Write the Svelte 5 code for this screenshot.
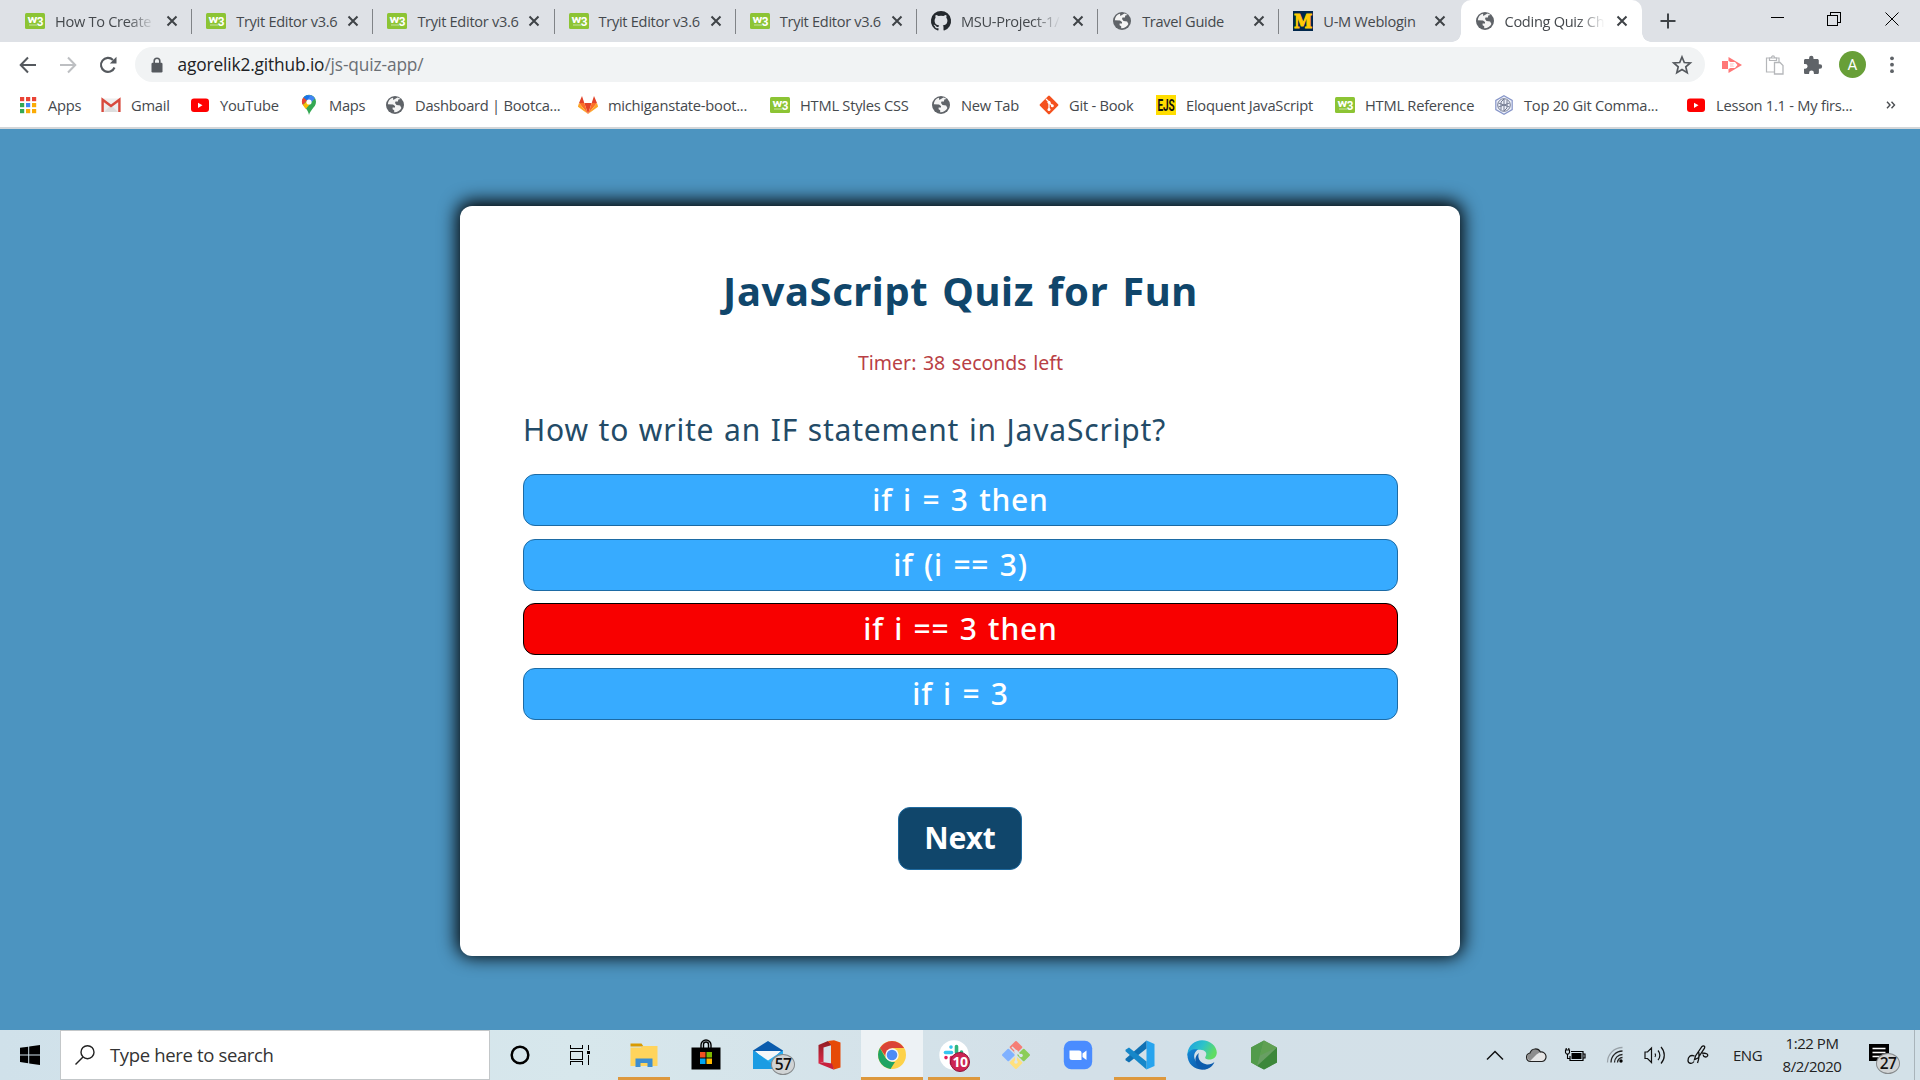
<script>
  const tabs = [
    { icon: 'w3', label: 'How To Create', fade: true },
    { icon: 'w3', label: 'Tryit Editor v3.6' },
    { icon: 'w3', label: 'Tryit Editor v3.6' },
    { icon: 'w3', label: 'Tryit Editor v3.6' },
    { icon: 'w3', label: 'Tryit Editor v3.6' },
    { icon: 'github', label: 'MSU-Project-1/', fade: true },
    { icon: 'globe', label: 'Travel Guide' },
    { icon: 'michigan', label: 'U-M Weblogin' },
    { icon: 'globe', label: 'Coding Quiz Ch', fade: true, active: true }
  ];
  const bookmarks = [
    ['apps', 'Apps'],
    ['gmail', 'Gmail'],
    ['youtube', 'YouTube'],
    ['maps', 'Maps'],
    ['globe', 'Dashboard | Bootca...'],
    ['gitlab', 'michiganstate-boot...'],
    ['w3', 'HTML Styles CSS'],
    ['globe', 'New Tab'],
    ['git', 'Git - Book'],
    ['ejs', 'Eloquent JavaScript'],
    ['w3', 'HTML Reference'],
    ['hex', 'Top 20 Git Comma...'],
    ['youtube', 'Lesson 1.1 - My firs...']
  ];
  const options = ['if i = 3 then', 'if (i == 3)', 'if i == 3 then', 'if i = 3'];
  let chosen = $state(2);
  const apps = [
    { icon: 'explorer', open: true },
    { icon: 'store' },
    { icon: 'mail', badge: '57' },
    { icon: 'office' },
    { icon: 'chrome', open: true, focus: true },
    { icon: 'slack', open: true, alert: '10' },
    { icon: 'gitbash' },
    { icon: 'zoom' },
    { icon: 'vscode', open: true },
    { icon: 'edge' },
    { icon: 'node' }
  ];
</script>

{#snippet favicon(name)}
  <svg class="fav" viewBox="0 0 20 20">
    {#if name === 'w3'}
      <rect y="2" width="20" height="16" rx="1.5" fill="#8cc434" />
      <text x="2.500" y="11.800" textLength="9.500" lengthAdjust="spacingAndGlyphs" font-family="Roboto" font-weight="700" font-size="10.500" fill="#fff">w</text>
      <text x="11.800" y="15" textLength="6.500" lengthAdjust="spacingAndGlyphs" font-family="Roboto" font-weight="700" font-size="13.500" fill="#fff">3</text>
      <path d="M4 14h8" stroke="#c9e3a0" stroke-width="1" />
    {:else if name === 'github'}
      <path fill="#24292e" d="M10 0a10 10 0 0 0-3.2 19.5c.5.1.7-.2.7-.5v-1.8c-2.8.6-3.4-1.3-3.4-1.3-.4-1.2-1.1-1.5-1.1-1.5-.9-.6.1-.6.1-.6 1 .1 1.5 1 1.5 1 .9 1.6 2.400 1.100 3 .9.1-.7.400-1.100.6-1.400-2.200-.2-4.600-1.100-4.600-4.900 0-1.100.4-2 1-2.700-.1-.3-.4-1.300.1-2.700 0 0 .8-.3 2.800 1a9.500 9.500 0 0 1 5 0c1.900-1.300 2.700-1 2.700-1 .6 1.400.2 2.400.1 2.700.7.7 1.100 1.600 1.100 2.700 0 3.800-2.400 4.700-4.600 4.900.4.300.7.9.7 1.900V19c0 .3.2.6.7.5A10 10 0 0 0 10 0z" />
    {:else if name === 'globe'}
      <circle cx="10" cy="10" r="9" fill="#5f6368" />
      <path fill="#fff" fill-opacity=".93" d="M8 2.800C5 3.500 3 6 2.800 9.200l5.200.3 2 1.400v1.500H7.600v1.800l1.600 1v2.100c3 .2 5.900-1.400 7.200-4.200l-1.300-2.700-3.600-.3-1.500-2 .5-1.500h2.400l.4-2 2.200-.7a7.300 7.300 0 0 0-3-1.300L9.500 4.200 8.300 5z" />
    {:else if name === 'michigan'}
      <rect width="20" height="20" fill="#00274c" />
      <text x="10" y="16.500" text-anchor="middle" textLength="18" lengthAdjust="spacingAndGlyphs" font-family="DejaVu Serif" font-weight="700" font-size="18" fill="#ffcb05" stroke="#ffcb05">M</text>
    {:else if name === 'apps'}
      {#each [0, 1, 2] as r}
        {#each [0, 1, 2] as c}
          <rect x={2 + c * 6} y={2 + r * 6} width="4.200" height="4.200" fill={[['#ea4335', '#ea4335', '#ea4335'], ['#34a853', '#4285f4', '#fbab05'], ['#34a853', '#fbab05', '#fbab05']][r][c]} />
        {/each}
      {/each}
    {:else if name === 'gmail'}
      <rect x="1" y="3.500" width="18" height="13.500" rx="1" fill="#eee" />
      <path d="M3 17l7-7 7 7" fill="#ddd" />
      <path d="M1.600 17V4.700L10 11l8.400-6.300V17" fill="none" stroke="#d8493c" stroke-width="2.400" />
    {:else if name === 'youtube'}
      <rect x="1" y="3.500" width="18" height="13.500" rx="3" fill="#f00" />
      <path d="M8 7.700l4.500 2.600L8 12.900z" fill="#fff" />
    {:else if name === 'maps'}
      <path fill="#34a853" d="M10 20c-.6-3-1.500-4.500-3-6.500C4.500 10.500 3 9 3 6.800a7 7 0 0 1 14 0c0 3.500-2 5-4 7.700-1.500 2-2.400 3.500-3 5.500z" />
      <path fill="#4285f4" d="M8 .3a7 7 0 0 1 8 3.200L10.500 9 8 5z" />
      <path fill="#1a73e8" d="M8 .2a7 7 0 0 0-3.600 2.200L8 5.500 11 1z" />
      <path fill="#ea4335" d="M4.400 2.400a7 7 0 0 0-.6 7.600L8 5.400z" />
      <path fill="#fbbc04" d="M3.800 10c.8 1.500 2 2.700 3 4l5.500-6.500-4-1.500z" />
      <circle cx="10" cy="7" r="2.600" fill="#fff" />
    {:else if name === 'gitlab'}
      <path fill="#e24329" d="M10 19L6.300 8h7.400z" />
      <path fill="#fc6d26" d="M10 19L6.300 8H1zM10 19l3.700-11H19z" />
      <path fill="#fca326" d="M1 8l-1 3.300c-.1.300 0 .6.300.8L10 19zM19 8l1 3.300c.1.300 0 .6-.3.800L10 19z" />
      <path fill="#e24329" d="M1 8h5.300L4 1zM19 8h-5.300L16 1z" />
    {:else if name === 'git'}
      <rect x="3" y="3" width="14" height="14" rx="1.200" transform="rotate(45 10 10)" fill="#f4511e" />
      <path d="M7 4l3 3v8M10 7.500l3.300 3.300" stroke="#fff" stroke-width="1.300" fill="none" />
      <circle cx="10" cy="7.300" r="1.500" fill="#fff" /><circle cx="10" cy="14.500" r="1.500" fill="#fff" /><circle cx="13.300" cy="10.800" r="1.500" fill="#fff" />
    {:else if name === 'ejs'}
      <rect width="20" height="20" fill="#fd0" />
      <text x="10" y="15.800" text-anchor="middle" textLength="17" lengthAdjust="spacingAndGlyphs" font-family="Roboto" font-weight="700" font-size="16" fill="#111">EJS</text>
    {:else if name === 'hex'}
      <path d="M10 .8l8.200 4.600v9.200L10 19.200l-8.200-4.600V5.400z" fill="#eef1fa" stroke="#8695c8" stroke-width="1.200" />
      <g fill="none" stroke="#747c92" stroke-width="1"><circle cx="10" cy="10" r="6.300" /><path d="M7 15V7l3-3v12M13 5v8l-3 3M4.500 8l11 4M4.500 12l11-4" /></g>
    {/if}
  </svg>
{/snippet}

{#snippet appIcon(name)}
  <svg class="app-icon" viewBox="0 0 30 30">
    {#if name === 'explorer'}
      <path d="M1.500 3.500h11l2 3h-13z" fill="#d99a00" />
      <path d="M1.500 7.500h10l3-1.500h14v20h-27z" fill="#ffd45c" />
      <path d="M6.500 27V18.500h17V27h-5v-4h-7v4z" fill="#3d8ed0" />
    {:else if name === 'store'}
      <path d="M10 9V5a5 5 0 0 1 10 0v4M12.500 8V4.500a2.500 2.500 0 0 1 5 0V8" fill="none" stroke="#000" stroke-width="1.400" />
      <path d="M.5 7.500h29v22H.5z" fill="#000" />
      <path d="M9 12h5.500v5.500H9z" fill="#f25022" /><path d="M15.500 12H21v5.500h-5.500z" fill="#7fba00" /><path d="M9 18.500h5.500V24H9z" fill="#00a4ef" /><path d="M15.500 18.500H21V24h-5.500z" fill="#ffb900" />
    {:else if name === 'mail'}
      <path d="M0 10.500L15 1l15 9.500V29H0z" fill="#0b5cad" />
      <path d="M2 11h26L15 24z" fill="#f5f7f9" />
      <path d="M0 10.500L15 20.500 30 10.500V29H0z" fill="#27aef0" /><path d="M0 10.500L26 29H0z" fill="#1b9ce3" />
    {:else if name === 'office'}
      <defs><linearGradient id="off" x2="0" y2="1"><stop stop-color="#8f1d22" /><stop offset="1" stop-color="#dc2948" /></linearGradient></defs>
      <g transform="translate(-1 0)">
        <path d="M14 1L4.500 5v18.500l5-1.500V7.500L18 5z" fill="url(#off)" />
        <path d="M14 1l6-.8 6.500 2.300v25l-6.500 2L17 24V5z" fill="#e64a08" />
        <path d="M4.500 23.500l5-1.200L18 23.500l2 6.200z" fill="#c8203d" />
      </g>
    {:else if name === 'chrome'}
      <circle cx="15" cy="15" r="14" fill="#fdd249" />
      <path d="M2.900 8A14 14 0 0 1 27.100 8H15l-5.200 10z" fill="#db4437" />
      <path d="M2.900 8L9 18.500l6 3.500 3 0-4.500 6.900A14 14 0 0 1 2.900 8z" fill="#1fa463" />
      <circle cx="15" cy="15" r="6.700" fill="#f5f7f8" /><circle cx="15" cy="15" r="5.300" fill="#4e8cf4" />
    {:else if name === 'slack'}
      <circle cx="15" cy="15" r="14.700" fill="#fff" />
      <g stroke-width="3.600" stroke-linecap="round"><path d="M6.500 12.500h6" stroke="#36c5f0" /><path d="M12 7v.1" stroke="#36c5f0" /><path d="M17.500 6.500v6M22.500 12v.1" stroke="#2eb67d" /><path d="M12.500 17.500v6M7 17.500v.1" stroke="#e01e5a" /><path d="M17.500 18h6M17.500 23v.1" stroke="#ecb22e" /></g>
    {:else if name === 'gitbash'}
      <g transform="rotate(45 15 15)"><rect x="4.800" y="4.800" width="9.500" height="9.500" rx="1" fill="#f57e76" /><rect x="15.700" y="4.800" width="9.500" height="9.500" rx="1" fill="#8ccd57" /><rect x="15.700" y="15.700" width="9.500" height="9.500" rx="1" fill="#ffe07d" /><rect x="4.800" y="15.700" width="9.500" height="9.500" rx="1" fill="#80b1ff" /></g>
      <path d="M11 7l4 4v12M15 11l5 5" fill="none" stroke="#dce5ec" stroke-width="1.700" /><circle cx="15" cy="11.500" r="1.800" fill="#dce5ec" /><circle cx="20" cy="15.500" r="1.800" fill="#dce5ec" /><circle cx="15" cy="22" r="1.800" fill="#dce5ec" />
    {:else if name === 'zoom'}
      <rect x=".8" y=".8" width="28.400" height="28.400" rx="7.500" fill="#4a8cff" />
      <path d="M6.500 10.500h9.500a2.500 2.500 0 0 1 2.500 2.500v7H9a2.500 2.500 0 0 1-2.500-2.500zM19.500 13.500l4-3v9.500l-4-3z" fill="#fff" />
    {:else if name === 'vscode'}
      <path d="M21.500.5L29.500 4v22l-8 3.500z" fill="#27a4ee" />
      <path d="M21.500.5v8L4 22.500l-3.500-2.300v-1.500z" fill="#0f70b3" />
      <path d="M21.500 29.500v-8L4 7.500.5 9.800v1.500z" fill="#1687c9" />
    {:else if name === 'edge'}
      <defs><linearGradient id="e1" x2="1" y2=".4"><stop stop-color="#1b9de2" /><stop offset=".55" stop-color="#2dc3c9" /><stop offset="1" stop-color="#5fdc63" /></linearGradient><linearGradient id="e2" x2="1" y2="1"><stop stop-color="#1389d8" /><stop offset="1" stop-color="#0c4fa0" /></linearGradient></defs>
      <path d="M.5 13C1.500 5 8 .2 15 .2c8 0 14.800 5.800 14.800 12.300 0 4.500-3.500 7-7.300 7-3.500 0-5-1.300-4-2.800 2.500-4-1-7-5-7C7 9.700 2 12 .5 16z" fill="url(#e1)" />
      <path d="M.4 14.500C1.500 10.500 6 8.500 11 9.500c-3 2-4.500 5-3.500 9C9 24 15 28 21.500 28.300 12 32.500.2 26.500.4 14.500z" fill="url(#e2)" />
      <path d="M12 13c-2 4 .5 10 7 11.300 3.500.7 6.500-.8 8.300-2.300-.6 3-4.500 7-10 7.500C9 28 5 18 12 13z" fill="#0c5cae" />
    {:else if name === 'node'}
      <path d="M15 .5l13 7v15l-13 7-13-7v-15z" fill="#689f63" /><path d="M15 .5L2 7.500v15L8 26z" fill="#529b4b" /><path d="M28 7.500L8 26l7 3.500 13-7z" fill="#3c873a" /><path d="M15 .5l13 7-17 8z" fill="#5fa052" />
    {/if}
  </svg>
{/snippet}

<div class="screen">
  <div class="tabstrip">
    {#each tabs as tab}
      <div class="tab" class:active={tab.active}>
        {@render favicon(tab.icon)}
        <span class="tab-label" class:fade={tab.fade}>{tab.label}</span>
        <svg class="tab-x" viewBox="0 0 12 12"><path d="M1.500 1.500l9 9M10.500 1.500l-9 9" stroke="#3f4347" stroke-width="2" /></svg>
      </div>
    {/each}
    <svg class="new-tab" viewBox="0 0 16 16"><path d="M8 .5v15M.5 8h15" stroke="#3f4347" stroke-width="2" /></svg>
    <svg class="win-btns" viewBox="0 0 128 14" shape-rendering="crispEdges">
      <path d="M0 5.500h13" stroke="#000" />
      <path d="M56.500 3.500h10v10h-10zM59.500 3V.5h9.500v10h-2" fill="none" stroke="#000" />
      <path d="M114.500.5l13 13M127.500.5l-13 13" stroke="#000" shape-rendering="auto" />
    </svg>
  </div>

  <div class="toolbar">
    <svg class="nav" viewBox="0 0 18 18"><path d="M17 9H2M9 1.500L1.700 9 9 16.500" fill="none" stroke="#55595e" stroke-width="2" /></svg>
    <svg class="nav" viewBox="0 0 18 18"><path d="M1 9h15M9 1.500L16.300 9 9 16.500" fill="none" stroke="#bdbfc2" stroke-width="2" /></svg>
    <svg class="nav" viewBox="0 0 18 18"><path d="M15.500 11.500A7 7 0 1 1 14 4" fill="none" stroke="#55595e" stroke-width="2.100" /><path d="M17.500.8v6.700h-6.700z" fill="#55595e" /></svg>
    <div class="omnibox">
      <svg class="lock" viewBox="0 0 12 16"><path d="M3.200 7V4a2.800 2.800 0 0 1 5.600 0v3" fill="none" stroke="#55595e" stroke-width="1.600" /><rect x=".5" y="5.800" width="11" height="9.700" rx="1.200" fill="#55595e" /></svg>
      <span class="url">agorelik2.github.io<span class="path">/js-quiz-app/</span></span>
      <svg class="star" viewBox="0 0 20 20"><path d="M10 2l2.300 5.500 6 .5-4.500 3.900 1.400 5.800L10 14.600l-5.200 3.100 1.400-5.800L1.700 8l6-.5z" fill="none" stroke="#55595e" stroke-width="1.700" /></svg>
    </div>
    <div class="tools">
      <svg class="ext" viewBox="0 0 20 20"><path d="M0 6h6v8H0zM6.500 2L20 10 6.500 18v-4l2-1H13l2.500-3-2.500-3H8.500l-2-1z" fill="#f77" /><path d="M8 8h4.500L11 10l1.500 2H8z" fill="#fdd" /></svg>
      <svg class="ext clip" viewBox="0 0 20 20"><path d="M9 17H1.500V3H14v4M4.500 5.500V2.800h2c0-2.500 3-2.500 3 0h2v2.700z" fill="none" stroke="#b5b7ba" stroke-width="1.200" /><path d="M9.500 7.500h5.500l3 3v8.500H9.500z" fill="#fff" stroke="#b5b7ba" stroke-width="1.300" /></svg>
      <svg class="ext puzzle" viewBox="0 0 20 20"><path d="M16.800 9.300h-1V5.500c0-.9-.7-1.600-1.600-1.600h-3.700v-1a2.200 2.200 0 0 0-4.400 0v1H2.500c-.9 0-1.500.7-1.500 1.600v3.400h1.200a2.400 2.400 0 0 1 0 4.800H1v3.700c0 .9.7 1.600 1.600 1.600h3.500v-1.100a2.400 2.400 0 0 1 4.800 0V19h3.400c.9 0 1.600-.7 1.600-1.600v-3.600h1a2.250 2.250 0 0 0 0-4.500z" fill="#5f6368" /></svg>
      <span class="avatar">A</span>
      <svg class="ext" viewBox="0 0 20 20"><circle cx="10" cy="3.300" r="1.900" fill="#5f6368" /><circle cx="10" cy="9.700" r="1.900" fill="#5f6368" /><circle cx="10" cy="16.200" r="1.900" fill="#5f6368" /></svg>
    </div>
  </div>

  <div class="bookmarks">
    {#each bookmarks as [icon, label]}
      <div class="bookmark">{@render favicon(icon)}<span>{label}</span></div>
    {/each}
    <svg class="more" viewBox="0 0 10 8"><path d="M1 .8L4 4 1 7.200M5.500.8l3 3.200-3 3.200" fill="none" stroke="#4a4d51" stroke-width="1.400" /></svg>
  </div>

  <main class="page">
    <section class="card">
      <h1>JavaScript Quiz for Fun</h1>
      <p class="timer">Timer: 38 seconds left</p>
      <p class="question">How to write an IF statement in JavaScript?</p>
      <div class="options">
        {#each options as option, i}
          <button class="option" class:wrong={chosen === i} onclick={() => (chosen = i)}>{option}</button>
        {/each}
      </div>
      <button class="next">Next</button>
    </section>
  </main>

  <footer class="taskbar">
    <div class="start"><svg viewBox="0 0 20 20"><path d="M0 2.800L8.200 1.700v7.700H0zM9.200 1.500L20 0v9.400H9.200zM0 10.400h8.200v7.800L0 17.100zM9.200 10.400H20V20L9.200 18.400z" fill="#000" /></svg></div>
    <div class="search">
      <svg viewBox="0 0 20 20"><circle cx="12.500" cy="7.200" r="6.500" fill="none" stroke="#222" stroke-width="1.400" /><path d="M8 12L.5 19.500" stroke="#222" stroke-width="1.400" /></svg>
      <span>Type here to search</span>
    </div>
    <div class="sys"><svg viewBox="0 0 20 20"><circle cx="10" cy="10" r="8.300" fill="none" stroke="#000" stroke-width="2.500" /></svg></div>
    <div class="sys"><svg viewBox="0 0 20 20" shape-rendering="crispEdges"><path d="M.5 0v3.500h12V0M.5 6.500h12v8H.5zM.5 20v-3.500h12V20M18.500 0v5M18.500 10v10" fill="none" stroke="#000" /><rect x="17" y="6" width="3" height="3" /></svg></div>
    <div class="apps">
      {#each apps as app}
        <div class="app" class:open={app.open} class:focus={app.focus}>
          {@render appIcon(app.icon)}
          {#if app.badge}<span class="badge">{app.badge}</span>{/if}
          {#if app.alert}<span class="alert">{app.alert}</span>{/if}
        </div>
      {/each}
    </div>
    <div class="tray">
      <svg viewBox="0 0 22 22"><path d="M3 15.500L11 7.500l8 8" fill="none" stroke="#111" stroke-width="1.500" /></svg>
      <svg viewBox="0 0 22 22"><path d="M5.500 17.500a4.300 4.300 0 0 1-.5-8.500 5.700 5.700 0 0 1 10.500-1A4.800 4.800 0 0 1 17 17.500z" fill="#e6e6e6" /><path d="M5 17a4.300 4.300 0 0 1 0-8 5.700 5.700 0 0 1 10.500-1l-4 2.500z" fill="#8d8d8d" /><path d="M5.500 17.500a4.300 4.300 0 0 1-.5-8.500 5.700 5.700 0 0 1 10.500-1A4.800 4.800 0 0 1 17 17.500z" fill="none" stroke="#222" stroke-width="1.200" /></svg>
      <svg viewBox="0 0 22 22"><path d="M6 7.500H18v9H5V12M18.500 10H20v4h-1.500" fill="none" stroke="#000" stroke-width="1.200" /><rect x="6.500" y="9" width="10" height="6" /><path d="M.5 6h4v2.500L3.500 10h-2l-1-1.500zM1.200 6V4M3.800 6V4M2.500 10v4.500H5" fill="none" stroke="#000" stroke-width="1.100" /></svg>
      <svg viewBox="0 0 22 22"><g fill="none" stroke-width="1.300"><path d="M1.500 18.500A15 15 0 0 1 16.500 3.500" stroke="#9aa3a9" /><path d="M5 18.500A11.500 11.500 0 0 1 16.500 7M8.500 18.500a8 8 0 0 1 8-8M11.500 18.500a5 5 0 0 1 5-5" stroke="#222" /></g><circle cx="15" cy="17" r="1.700" /></svg>
      <svg viewBox="0 0 22 22"><path d="M-1 8v6.500h2.500l4 4V4l-4 4zM9 9.500a3 3 0 0 1 0 3.500M12 6.500a7 7 0 0 1 0 9.500M15 3a12 12 0 0 1 0 16.500" fill="none" stroke="#111" stroke-width="1.200" /></svg>
      <svg viewBox="0 0 22 22"><path d="M7.500 15.500l1-3.500L15 2.500c1.500-1.500 3.500 0 2.500 1.700L11 14zM7.500 12c-4-1.500-6.500.5-6.500 4.500 0 3 4 4 6 1M15 9c4 0 6.500 1 5.500 3-1 1.500-4 1.500-4.500-1.500M10.500 19c1.500-4 2-8 1-12" fill="none" stroke="#111" stroke-width="1.300" /></svg>
    </div>
    <span class="lang">ENG</span>
    <div class="clock"><span>1:22 PM</span><span>8/2/2020</span></div>
    <div class="notify">
      <svg viewBox="0 0 20 22"><path d="M0 0h20v17h-6v4l-4-4H0z" /><path d="M3.500 4.500h13M3.500 8.500h13M3.500 12.500h8" stroke="#fff" stroke-width="1.500" /></svg>
      <span class="badge">27</span>
    </div>
    <div class="peek"></div>
  </footer>
</div>

<style>
  :global(body) { margin: 0; overflow: hidden; }
  .screen { width: 1920px; height: 1080px; display: flex; flex-direction: column; font-family: 'Open Sans', 'Noto Sans', sans-serif; overflow: hidden; }
  svg { display: block; flex: none; overflow: visible; }
  span { white-space: nowrap; }
  .fav { width: 20px; height: 20px; }

  .tabstrip { height: 42px; background: #dee1e6; display: flex; align-items: center; padding-left: 11px; flex: none; }
  .tab { width: 181.200px; height: 42px; box-sizing: border-box; padding-left: 14px; display: flex; align-items: center; flex: none; position: relative; font-size: 14.600px; letter-spacing: -0.300px; color: #45494d; }
  .tab:not(.active)::after { content: ''; position: absolute; right: 0; top: 9px; width: 1px; height: 25px; background: #808387; }
  .tab:nth-child(8)::after { display: none; }
  .tab.active { background: #fff; border-radius: 10px 10px 0 0; }
  .tab.active::before, .tab.active::after { content: ''; position: absolute; bottom: 0; width: 9px; height: 9px; }
  .tab.active::before { left: -9px; background: radial-gradient(circle at 0 0, transparent 8.500px, #fff 9px); }
  .tab.active::after { right: -9px; background: radial-gradient(circle at 100% 0, transparent 8.500px, #fff 9px); }
  .tab-label { width: 103px; margin-left: 10px; line-height: 20px; }
  .fade { mask-image: linear-gradient(90deg, #000 70%, transparent 97%); }
  .tab-x { width: 12px; height: 12px; margin-left: 8px; }
  .new-tab { width: 16px; height: 16px; margin-left: 18px; }
  .win-btns { width: 128px; height: 14px; margin: 0 21px 5px auto; }

  .toolbar { height: 45px; display: flex; align-items: center; padding-left: 19px; background: #fff; flex: none; }
  .nav { width: 18px; height: 18px; margin-right: 22px; }
  .nav:nth-child(3) { margin-right: 18px; }
  .omnibox { width: 1570px; height: 35px; flex: none; box-sizing: border-box; border-radius: 18px; background: #f1f3f4; display: flex; align-items: center; padding: 0 13px 0 16px; }
  .lock { width: 12px; height: 16px; }
  .url { margin-left: 14.500px; font-size: 17.300px; letter-spacing: -0.130px; color: #202124; line-height: 24px; }
  .path { color: #6b6f74; }
  .star { width: 20px; height: 20px; margin-left: auto; }
  .tools { display: flex; align-items: center; padding-left: 17px; }
  .ext { width: 20px; height: 20px; }
  .clip { margin-left: 23px; }
  .puzzle { margin: 0 16px 0 18px; }
  .avatar { width: 27px; height: 27px; border-radius: 50%; background: #689f38; color: #fff; font: 15px/28px Roboto, sans-serif; text-align: center; margin-right: 16px; }

  .bookmarks { height: 40px; padding: 0 0 0 18px; border-bottom: 2px solid #d3d6d9; display: grid; grid-template-columns: 83px 89px 109px 86px 193px 192px 161px 108px 117px 179px 159px 192px 200px 10px; align-items: center; background: #fff; flex: none; }
  .bookmark { display: flex; align-items: center; gap: 10px; font-size: 14.700px; letter-spacing: -0.250px; color: #45494d; height: 20px; margin-bottom: 5px; line-height: 20px; }
  .more { width: 10px; height: 8px; margin-bottom: 5px; }

  .page { flex: 1; background: #4c94c0; display: flex; justify-content: center; align-items: flex-start; padding-top: 77px; min-height: 0; box-sizing: border-box; }
  .card { width: 1000px; height: 750px; box-sizing: border-box; padding: 57px 62px 0 63px; border-radius: 12px; background: #fff; box-shadow: 0 -2px 18px 3px #000; display: flex; flex-direction: column; align-items: center; font-family: 'Noto Sans', 'Open Sans', sans-serif; }
  h1 { margin: 0; font-size: 40px; line-height: 56px; font-weight: 700; color: #10466b; letter-spacing: 0.600px; word-spacing: 3px; white-space: nowrap; }
  .timer { margin: 30px 0 0; font-size: 19.500px; line-height: 28px; color: #b93f45; letter-spacing: 0; word-spacing: 1.500px; }
  .question { margin: 32px 0 0; align-self: stretch; font-size: 30px; line-height: 42px; color: #234b67; letter-spacing: 0.830px; word-spacing: 1px; white-space: nowrap; }
  .options { align-self: stretch; display: flex; flex-direction: column; gap: 12.600px; margin-top: 23px; }
  .option { height: 52px; box-sizing: border-box; border: 1px solid #1d6ba5; border-radius: 12px; background: #37abff; color: #fff; font: 500 30px/48px 'Noto Sans', sans-serif; letter-spacing: 0.800px; word-spacing: 1.800px; padding: 0; }
  .wrong { background: #f80000; border-color: #000; }
  .next { margin: 87px 1px 0 0; width: 124px; height: 63px; border: 1px solid #1f6a9f; border-radius: 12px; background: #10466b; color: #fff; font: 700 30px/60px 'Noto Sans', sans-serif; letter-spacing: -0.200px; padding: 0; }

  .taskbar { height: 50px; flex: none; display: flex; align-items: center; background: linear-gradient(90deg, #d0e1ea, #d7e7ec 30%, #d3e0e8 55%, #d3e1e8); }
  .start { width: 60px; }
  .start svg { width: 20px; height: 20px; margin-left: 20px; }
  .search { width: 430px; height: 50px; box-sizing: border-box; border: 1px solid #c3c7c9; background: #fff; display: flex; align-items: center; padding: 0 0 2px 14px; font-size: 18.500px; letter-spacing: -0.350px; color: #333; gap: 15px; }
  .search svg { width: 20px; height: 20px; margin-top: 1px; }
  .sys { width: 60px; }
  .sys svg { width: 20px; height: 20px; margin-left: 20px; }
  .apps { display: flex; margin-left: 3px; }
  .app { width: 62px; height: 50px; position: relative; display: flex; justify-content: center; align-items: center; }
  .app-icon { width: 30px; height: 30px; }
  .app.open::after { content: ''; position: absolute; bottom: 0; left: 5px; right: 5px; height: 3px; background: #dd983d; }
  .app.focus { background: #edf2f5; }
  .app.focus::after { left: 0; right: 0; }
  .badge { position: absolute; width: 22px; height: 19px; border: 1px solid #85898b; border-radius: 50%; background: #d1d4d5; font-size: 15.500px; line-height: 19px; text-align: center; color: #111; font-weight: 600; letter-spacing: -0.500px; }
  .app .badge { left: 34px; top: 24px; }
  .alert { position: absolute; left: 27px; top: 22px; width: 18px; height: 18px; border: 1px solid #8e143c; border-radius: 50%; background: #cd2553; color: #fff; font-size: 14px; line-height: 18px; text-align: center; font-weight: 700; letter-spacing: -0.500px; }
  .tray { display: flex; margin-left: auto; gap: 18.600px; }
  .tray svg { width: 22px; height: 22px; }
  .lang { width: 30px; margin-left: 24px; font-size: 15px; letter-spacing: -0.500px; color: #222; }
  .clock { width: 74px; margin-left: 12px; display: flex; flex-direction: column; align-items: center; font-size: 15px; letter-spacing: -0.450px; line-height: 23px; color: #222; }
  .notify { width: 45px; margin-left: 20px; position: relative; }
  .notify svg { width: 20px; height: 22px; }
  .notify .badge { left: 7px; top: 9px; }
  .peek { width: 5px; height: 50px; border-left: 1px solid #a9b4ba; }
</style>
